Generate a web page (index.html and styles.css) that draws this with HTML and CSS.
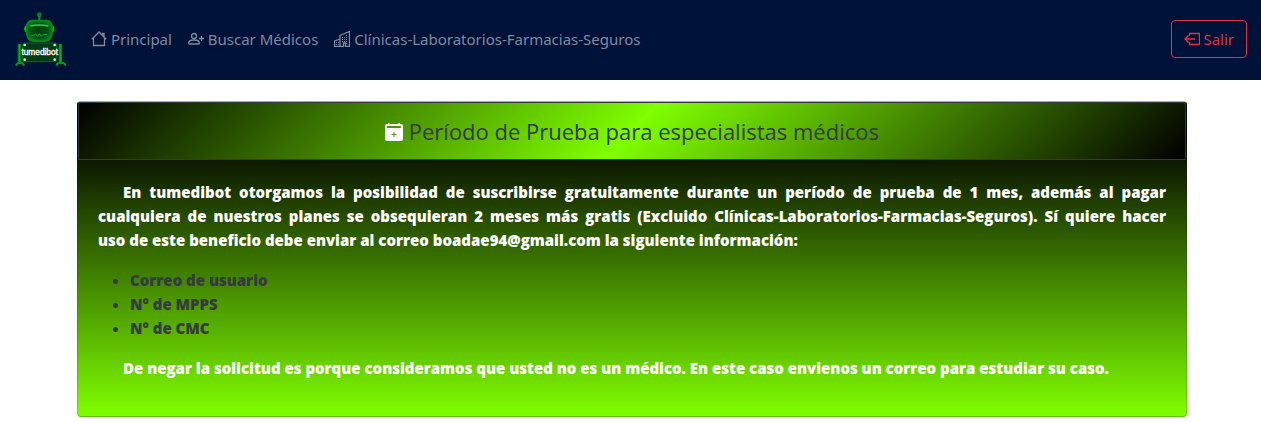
FILE: index.html
```html
<!DOCTYPE html>
<html lang="es">
<head>
<meta charset="utf-8">
<title>tumedibot</title>
<link rel="stylesheet" href="styles.css">
</head>
<body>
<header class="navbar">
  <a class="brand" href="#" aria-label="tumedibot">
    <svg class="logo" viewBox="45 30 159 174" aria-hidden="true">
      <defs>
        <radialGradient id="head"><stop offset="0" stop-color="#063a12"/><stop offset=".7" stop-color="#055417"/><stop offset="1" stop-color="#08801a"/></radialGradient>
      </defs>
      <circle cx="121" cy="44" r="7" fill="#087a30"/>
      <path d="M121 48v12" stroke="#05942a" stroke-width="6"/>
      <path d="M84 76q-14 10 0 22zM158 76q14 10 0 22z" fill="#00ce18" stroke="#00b818" stroke-width="4"/>
      <path d="M98 61h46q12 2 15 14v25q-2 22-20 24h-36q-18-2-20-24V75q3-12 15-14z" fill="url(#head)" stroke="#078a16" stroke-width="4"/>
      <path d="M94 78q27-6 54 0" stroke="#22d53d" stroke-width="4" fill="none"/>
      <path d="M96 106h9l5-4 5 7 6-8 6 8 5-5h13" stroke="#14a52c" stroke-width="3" fill="none"/>
      <path d="M61 132v56M184 132v56" stroke="#06851c" stroke-width="10"/>
      <path d="M61 134v52M184 134v52" stroke="#0bb52c" stroke-width="3"/>
      <path d="M52 197q0-8 8-8h6q8 0 8 8M173 197q0-8 8-8h10q8 0 8 8" stroke="#08902c" stroke-width="6" fill="none"/>
      <rect x="71" y="129" width="102" height="56" rx="4" fill="#033c14" stroke="#07691a" stroke-width="3"/>
      <g fill="#c5efd0"><circle cx="77" cy="135" r="4"/><circle cx="167" cy="135" r="4"/><circle cx="77" cy="179" r="4"/><circle cx="167" cy="179" r="4"/></g>
      <text x="122" y="166" text-anchor="middle" class="logo-text">tumedibot</text>
    </svg>
  </a>
  <nav class="links">
    <a href="#"><svg class="icon" viewBox="0 0 16 16"><path d="M2.500 7v7.500h11V7M.8 8.200 8 1l7.200 7.200M11.500 4.500V2.500h1.500v3.500" fill="none" stroke="currentColor"/></svg> Principal</a>
    <a href="#"><svg class="icon" viewBox="0 0 16 16"><path d="M1.500 13h9c.6 0 .9-.4.9-.9 0-1.300-1.500-3.100-5.400-3.100S.6 10.800.6 12.100c0 .5.300.9.900.9zM13.500 5v5M11 7.500h5" fill="none" stroke="currentColor"/><circle cx="6" cy="5" r="2.500" fill="none" stroke="currentColor"/></svg> Buscar Médicos</a>
    <a href="#"><svg class="icon" viewBox="0 0 16 16"><path d="M.5 15.500V10l5.500-2V4.500l9.500-4v15h-4V12h-2v3.500zM6 8v7.500" fill="none" stroke="currentColor"/><path d="M2 11h1v1H2zm2 0h1v1H4zm-2 2h1v1H2zm2 0h1v1H4zm4-7h1v1H8zm2 0h1v1h-1zm2 0h1v1h-1zM8 8h1v1H8zm2 0h1v1h-1zm2 0h1v1h-1zm-4 2h1v1H8zm2 0h1v1h-1zm2 0h1v1h-1zm0-6h1v1h-1zm0 8h1v1h-1z" fill="currentColor"/></svg> Clínicas-Laboratorios-Farmacias-Seguros</a>
  </nav>
  <button class="exit" type="button"><svg class="icon" viewBox="0 0 16 16"><path d="M5.500 5V2.500h10v11h-10V11M11 8H1M4.500 4.500 1 8l3.500 3.500" fill="none" stroke="currentColor"/></svg> Salir</button>
</header>
<main class="container">
  <section class="card">
    <h1 class="card-header"><svg class="title-icon" viewBox="0 0 18 18"><path fill="#fff" fill-rule="evenodd" d="M3 0h1.500v1h9V0H15v1h1q2 0 2 2v13q0 2-2 2H2q-2 0-2-2V3q0-2 2-2h1zM2.500 3q-.5 0-.5.500v1q0 .5.500.5h13q.5 0 .5-.5v-1q0-.5-.5-.5zM8.500 9v2h-2v1h2v2h1v-2h2v-1h-2V9z"/></svg> Período de Prueba para especialistas médicos</h1>
    <div class="card-body">
      <p>En tumedibot otorgamos la posibilidad de suscribirse gratuitamente durante un período de prueba de 1 mes, además al pagar cualquiera de nuestros planes se obsequieran 2 meses más gratis (Excluido Clínicas-Laboratorios-Farmacias-Seguros). Sí quiere hacer uso&nbsp;de este beneficio debe enviar al correo boadae94@gmail.com la siguiente información:</p>
      <ul>
        <li>Correo de usuario</li>
        <li>N° de MPPS</li>
        <li>N° de CMC</li>
      </ul>
      <p>De negar la solicitud es porque consideramos que usted no es un médico. En este caso envienos un correo para estudiar su caso.</p>
    </div>
  </section>
</main>
</body>
</html>
```
FILE: styles.css
```css
* { box-sizing: border-box; }
body {
  margin: 0;
  background: #fff;
  color: #343a40;
  font: 15px/24px "Noto Sans", "Open Sans", sans-serif;
}
.navbar {
  display: flex;
  align-items: center;
  padding: 7px 14px 9px;
  min-height: 80px;
  background: #001238;
}
.brand { display: flex; margin-right: 16px; }
.logo { width: 53px; height: 58px; }
.logo-text { font: 25px "Liberation Sans", sans-serif; fill: #fff; stroke: #fff; stroke-width: 1; }
.links { display: flex; flex: 1; }
.links a {
  padding: 8px;
  color: #8089a0;
  text-decoration: none;
  white-space: nowrap;
}
.icon { width: 16px; height: 16px; vertical-align: -2px; stroke-width: 1.3; }
.exit {
  padding: 6px 12px;
  border: 1px solid #dc3545;
  border-radius: 4px;
  background: transparent;
  color: #dc3545;
  font: inherit;
}
.container {
  max-width: 1113px;
  margin: 21px auto 0;
  padding-left: 3px;
}
.card {
  border: 1px solid rgba(0, 0, 0, .125);
  border-top-color: #7fdc1e;
  border-bottom-color: #65bd18;
  border-radius: 4px;
  background: linear-gradient(#000 10%, #7fff00);
}
.card-header {
  margin: 0;
  padding: 12px 20px;
  border: 1px solid #343a40;
  border-radius: 3px 3px 0 0;
  background: linear-gradient(135deg, #000, #7fff00, #000);
  font-family: "Open Sans", sans-serif;
  font-size: 22px;
  font-weight: 400;
  line-height: 32px;
  text-align: center;
}
.title-icon { width: 18px; height: 18px; vertical-align: -1px; }
.card-body {
  padding: 20px;
  font-family: "Open Sans", sans-serif;
  font-weight: 800;
}
.card-body p {
  margin: 0 0 16px;
  color: #fff;
  text-align: justify;
  text-indent: 25px;
}
.card-body ul { margin: 0 0 16px; padding-left: 32px; }
```
